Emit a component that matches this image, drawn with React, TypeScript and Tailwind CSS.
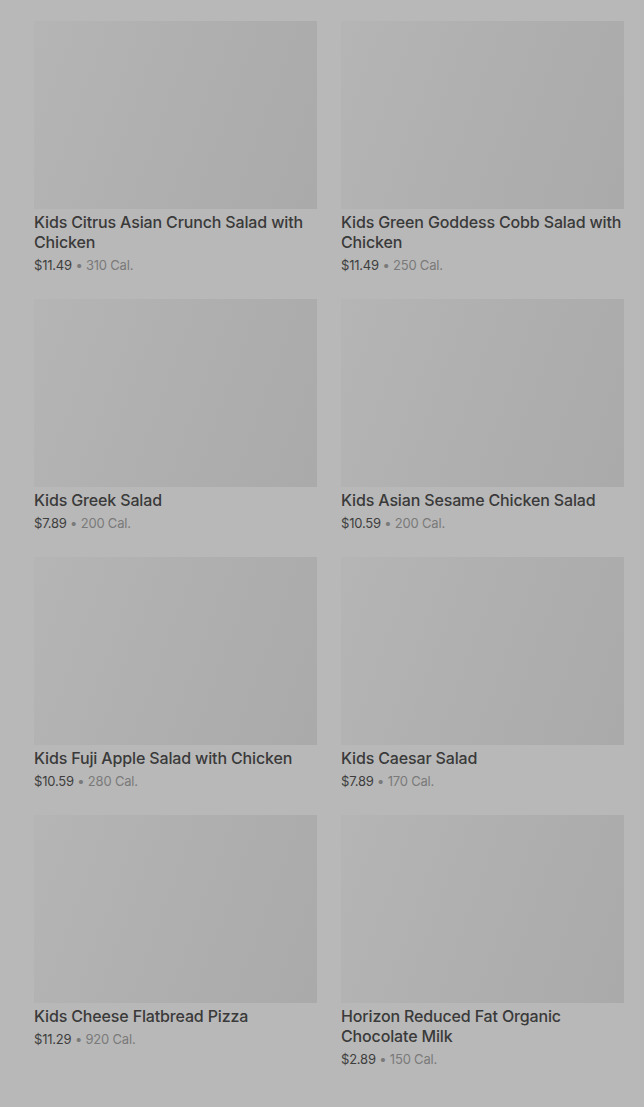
import React from "react";

const items = [
  { name: "Kids Citrus Asian Crunch Salad with Chicken", price: "$11.49", cal: "310 Cal." },
  { name: "Kids Green Goddess Cobb Salad with Chicken", price: "$11.49", cal: "250 Cal." },
  { name: "Kids Greek Salad", price: "$7.89", cal: "200 Cal." },
  { name: "Kids Asian Sesame Chicken Salad", price: "$10.59", cal: "200 Cal." },
  { name: "Kids Fuji Apple Salad with Chicken", price: "$10.59", cal: "280 Cal." },
  { name: "Kids Caesar Salad", price: "$7.89", cal: "170 Cal." },
  { name: "Kids Cheese Flatbread Pizza", price: "$11.29", cal: "920 Cal." },
  { name: "Horizon Reduced Fat Organic Chocolate Milk", price: "$2.89", cal: "150 Cal." },
];

export default function App() {
  return (
    <div
      className="min-h-[1107px] w-full bg-[#b8b8b8] pl-[34px] pr-[20px] pt-[21px] pb-10"
      style={{ fontFamily: "Inter, 'Noto Sans', sans-serif" }}
    >
      <div className="grid grid-cols-2 gap-x-[24px] gap-y-[24px]">
        {items.map((it) => (
          <div key={it.name} className="flex flex-col">
            <div className="h-[188px] w-full bg-[linear-gradient(110deg,#b5b5b5_0%,#afafaf_50%,#aaaaaa_100%)]" />
            <div className="mt-[3px] text-[16px] leading-[20px] font-medium tracking-[-0.15px] text-[#3a3a3a]">
              {it.name}
            </div>
            <div className="mt-[3px] text-[13px] leading-[20px] tracking-[-0.2px]">
              <span className="text-[#3e3e3e]">{it.price}</span>
              <span className="text-[#7a7a7a]"> • {it.cal}</span>
            </div>
          </div>
        ))}
      </div>
    </div>
  );
}
